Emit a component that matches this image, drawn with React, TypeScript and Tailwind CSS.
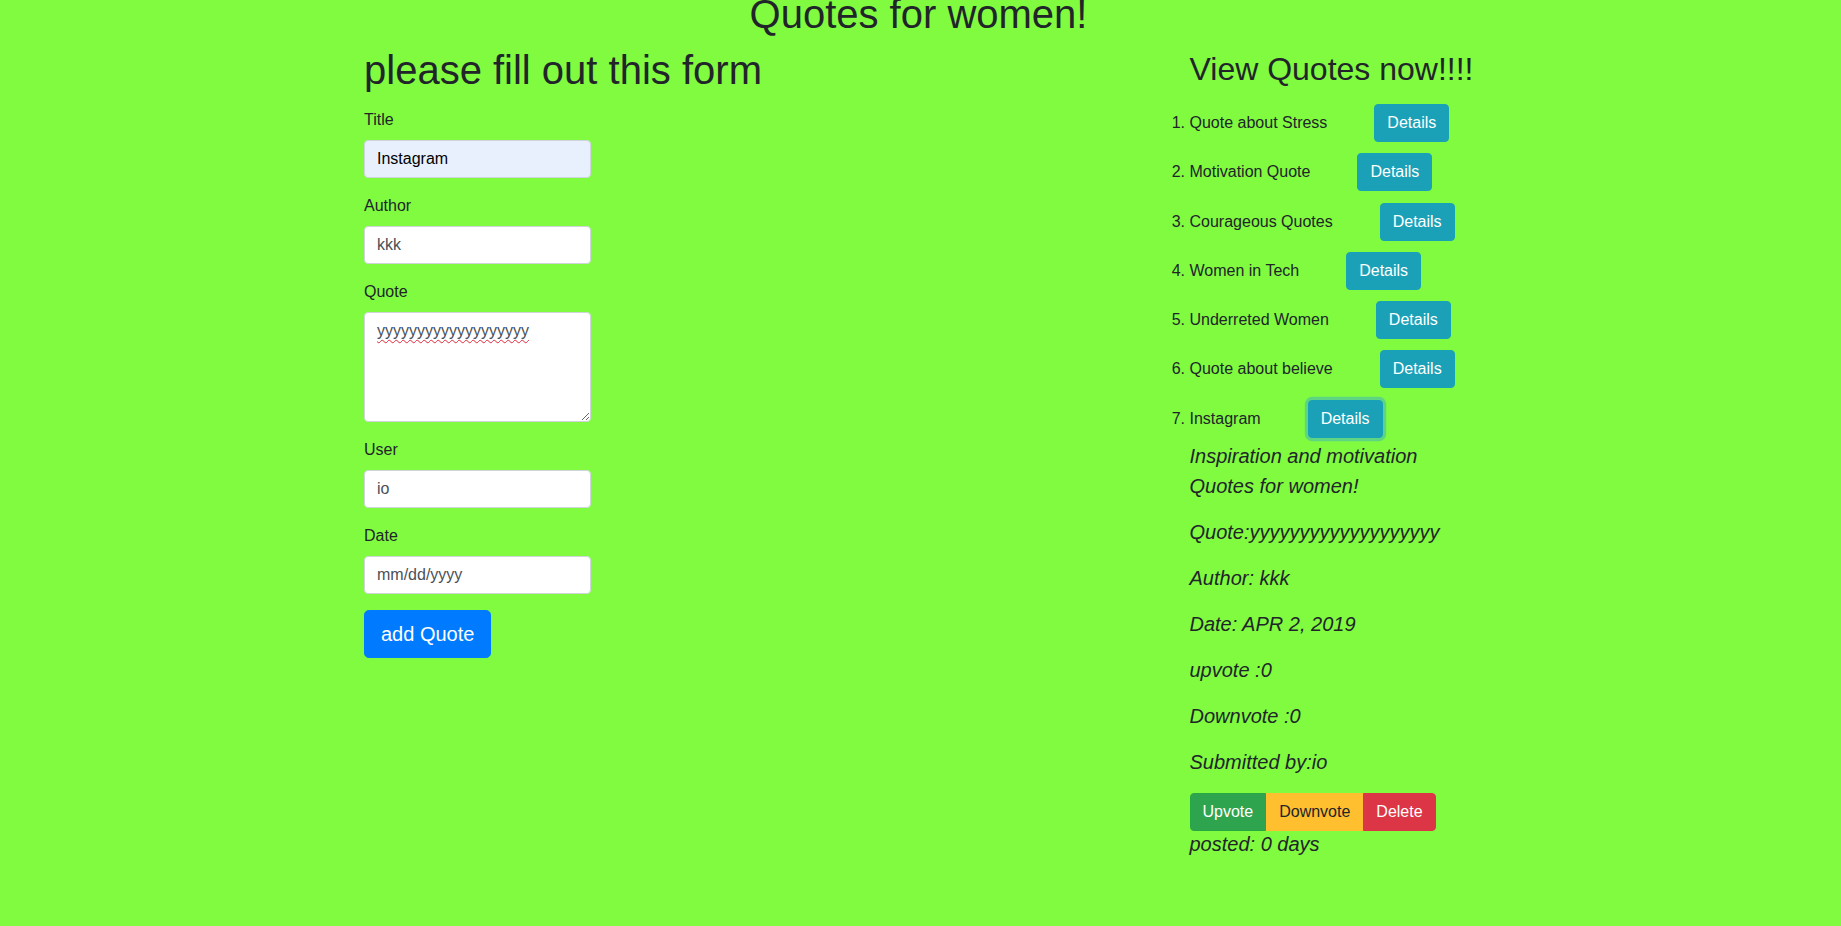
import React from "react";

const items = [
  "Quote about Stress",
  "Motivation Quote",
  "Courageous Quotes",
  "Women in Tech",
  "Underreted Women",
  "Quote about believe",
  "Instagram",
];

function Field({ label, value, bg, dark }: { label: string; value: string; bg?: boolean; dark?: boolean }) {
  return (
    <div className="mb-4">
      <label className="mb-2 block text-[16px] leading-[24px]">{label}</label>
      <input
        readOnly
        defaultValue={value}
        className={
          "block h-[38px] w-[227px] rounded-[4px] border border-[#ced4da] px-[12px] py-[6px] text-[16px] leading-[24px] outline-none " +
          (bg ? "bg-[#e8f0fe] " : "bg-white ") +
          (dark ? "text-black" : "text-[#495057]")
        }
      />
    </div>
  );
}

export default function App() {
  return (
    <div className="min-h-screen w-full overflow-hidden bg-[#80fb40] font-['Liberation_Sans',Arial,sans-serif] text-[#212529]">
      <h1 className="-mt-[10.35px] pr-[4px] text-center text-[40px] font-normal leading-[48px]">Quotes for women!</h1>
      <div className="ml-[364px] flex">
        <div className="w-[825.5px]">
          <h2 className="mt-[8.6px] text-[40px] font-normal leading-[48px]">please fill out this form</h2>
          <form className="mt-[13.75px] w-[227px]">
            <Field label="Title" value="Instagram" bg dark />
            <Field label="Author" value="kkk" />
            <div className="mb-4">
              <label className="mb-2 block text-[16px] leading-[24px]">Quote</label>
              <textarea
                readOnly
                rows={4}
                defaultValue="yyyyyyyyyyyyyyyyyyy"
                className="block h-[110px] w-[227px] rounded-[4px] border border-[#ced4da] bg-white px-[12px] py-[6px] text-[16px] leading-[24px] text-[#495057] underline decoration-[#e0283a] decoration-wavy decoration-[1px] underline-offset-[3px] outline-none"
              />
            </div>
            <Field label="User" value="io" />
            <Field label="Date" value="mm/dd/yyyy" />
            <button
              type="button"
              className="rounded-[4.8px] border border-[#007bff] bg-[#007bff] px-4 py-2 text-[20px] leading-[30px] text-white"
            >
              add Quote
            </button>
          </form>
        </div>
        <div className="w-[286px]">
          <h2 className="mt-[12.05px] text-[32px] font-normal leading-[38.4px]">View Quotes now!!!!</h2>
          <ol className="mt-[16px] list-outside list-decimal space-y-[11.28px] text-[16px] leading-[24px]">
            {items.map((t, i) => (
              <li key={t}>
                <span>{t}</span>
                <button
                  type="button"
                  className={
                    "ml-[47px] inline-block rounded-[4px] border border-[#17a2b8] bg-[#1ba1b7] px-3 py-[6px] align-baseline text-[16px] leading-[24px] text-white " +
                    (i === 6 ? "shadow-[0_0_0_3.2px_rgba(58,176,195,0.5)]" : "")
                  }
                >
                  Details
                </button>
              </li>
            ))}
          </ol>
          <div className="mt-[3.4px] text-[20px] italic leading-[30px]">
            <p className="mb-4">Inspiration and motivation Quotes for women!</p>
            <p className="mb-4">Quote:yyyyyyyyyyyyyyyyyyy</p>
            <p className="mb-4">Author: kkk</p>
            <p className="mb-4">Date: APR 2, 2019</p>
            <p className="mb-4">upvote :0</p>
            <p className="mb-4">Downvote :0</p>
            <p className="mb-4">Submitted by:io</p>
            <div className="mt-[3.6px] flex not-italic">
              <button
                type="button"
                className="rounded-l-[4px] border border-[#28a745] bg-[#2ea44f] px-3 py-[6px] text-[16px] leading-[24px] text-white"
              >
                Upvote
              </button>
              <button
                type="button"
                className="border border-[#ffbf2f] bg-[#ffbf2f] px-3 py-[6px] text-[16px] leading-[24px] text-[#212529]"
              >
                Downvote
              </button>
              <button
                type="button"
                className="rounded-r-[4px] border border-[#dc3545] bg-[#dc3545] px-3 py-[6px] text-[16px] leading-[24px] text-white"
              >
                Delete
              </button>
            </div>
            <p className="-mt-[2px]">posted: 0 days</p>
          </div>
        </div>
      </div>
    </div>
  );
}
